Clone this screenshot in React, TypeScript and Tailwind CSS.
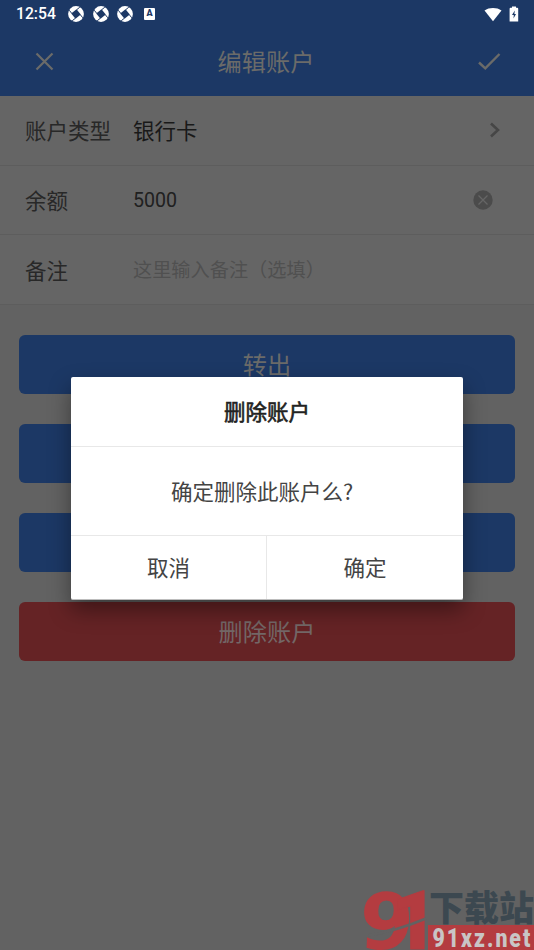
import { useState } from "react";
import type { ReactNode } from "react";

const FONT = "font-['Noto_Sans_CJK_SC',sans-serif]";

const TRANSFER_ACTIONS = ["转出", "转入", "调整余额"];

function ShutterIcon() {
  return (
    <svg width="16" height="16" viewBox="0 0 16 16" fill="none">
      <circle cx="8" cy="8" r="7.9" fill="#fff" />
      <path d="M8.500 3.200 12.800 8.500 7.500 12.800 3.200 7.500Z" fill="#1c3865" />
      <g stroke="#1c3865" strokeWidth="1">
        <path d="M8.600 3.800 11.800 1.200" />
        <path d="M12.200 8.600 14.800 11.800" />
        <path d="M7.400 12.200 4.200 14.800" />
        <path d="M3.800 7.400 1.200 4.200" />
      </g>
    </svg>
  );
}

function StatusBar() {
  return (
    <div className="flex h-7 items-center justify-between pl-4 pr-[15px] font-[Roboto] text-white">
      <div className="flex items-center">
        <span className="w-[52px] text-[15.700px] font-medium leading-7">12:54</span>
        <div className="flex items-center gap-[8.500px]">
          <ShutterIcon />
          <ShutterIcon />
          <ShutterIcon />
        </div>
        <span className="ml-[11px] flex h-3 w-[11px] items-center justify-center rounded-[1px] bg-white text-[9px] font-black text-[#1c3865]">
          A
        </span>
      </div>
      <div className="flex items-center gap-[7px]">
        <svg width="18" height="15" viewBox="0 0 18 15">
          <path d="M.5 3.500C5 .2 13 .2 17.500 3.500L9 14.200Z" fill="#fff" />
        </svg>
        <svg width="10" height="16" viewBox="0 0 10 16">
          <path d="M3 .5h4v1.200h1.200q1 0 1 1V15.500H.6V2.700q0-1 1-1H3Z" fill="#fff" />
          <path d="M5.800 4.500 3 9h1.800l-.3 3.500L7 8H5.400Z" fill="#1c3865" />
        </svg>
      </div>
    </div>
  );
}

function Header() {
  return (
    <header className="h-24 bg-[#1c3865] text-[#6b6b69]">
      <StatusBar />
      <div className="flex h-[66px] items-center justify-between pl-[35px] pr-8">
        <button type="button" aria-label="关闭">
          <svg width="19" height="19" viewBox="0 0 19 19" stroke="currentColor" strokeWidth="2.200">
            <path d="M1.500 1.500 17.500 17.500M17.500 1.500 1.500 17.500" />
          </svg>
        </button>
        <h1 className="pl-px text-[24.200px] font-normal">编辑账户</h1>
        <button type="button" aria-label="保存">
          <svg width="25" height="19" viewBox="0 0 25 19" fill="none" stroke="currentColor" strokeWidth="2.400">
            <path d="M2 10.500 8.300 16.400 22.500 2" />
          </svg>
        </button>
      </div>
    </header>
  );
}

type RowProps = {
  label: string;
  children: ReactNode;
};

function FormRow({ label, children }: RowProps) {
  return (
    <div className="flex h-[69.670px] items-center border-b border-[#5d5d5d] pl-[25px]">
      <span className="w-[108px] shrink-0 text-[21.500px] text-[#282828]">{label}</span>
      {children}
    </div>
  );
}

function DeleteDialog({ onClose }: { onClose: () => void }) {
  return (
    <div
      role="dialog"
      className="absolute left-[71px] top-[377px] h-[223px] w-[392px] overflow-hidden rounded-[2px] border-b border-[#bdbdbd] bg-white text-[21.500px] text-[#444] shadow-[0_10px_22px_rgba(0,0,0,0.4)]"
    >
      <h2 className="flex h-[70px] items-center justify-center border-b border-[#e8e8e8] text-[#222] [-webkit-text-stroke:0.600px_#222]">
        删除账户
      </h2>
      <p className="flex h-[89px] items-center justify-center border-b border-[#e8e8e8] pr-[10px]">
        确定删除此账户么?
      </p>
      <div className="flex h-[63px]">
        <button type="button" onClick={onClose} className="w-[196px] border-r border-[#e8e8e8]">
          取消
        </button>
        <button type="button" onClick={onClose} className="w-[196px]">
          确定
        </button>
      </div>
    </div>
  );
}

function SiteMark() {
  return (
    <svg className="absolute bottom-0 right-0" width="174" height="64" viewBox="0 0 174 64">
      <g fill="#b43c40">
        <text x="1" y="63" fontSize="78" fontFamily="'DejaVu Sans'" fontWeight="700" transform="skewX(-2)">
          9
        </text>
        <text x="31" y="63" fontSize="81" fontFamily="Roboto" fontWeight="900" stroke="#b43c40">
          1
        </text>
      </g>
      <path d="M8 49.500Q36 45 66 32.500" fill="none" stroke="#626262" strokeWidth="2.500" />
      <text
        x="69"
        y="35"
        fontSize="35"
        fontWeight="900"
        fill="#3c4850"
        fontFamily="'Noto Sans CJK SC'"
      >
        下载站
      </text>
      <rect x="68" y="39" width="106" height="25" fill="#b43c40" />
      <text
        transform="translate(72.500 60.500) scale(.85 1)"
        fontSize="25"
        fontWeight="900"
        fontFamily="Roboto"
        fill="#c9c5c5"
        textLength="115"
        lengthAdjust="spacing"
      >
        91xz.net
      </text>
    </svg>
  );
}

export default function App() {
  const [dialogOpen, setDialogOpen] = useState(true);

  return (
    <div lang="zh-CN" className={`relative h-[950px] w-[534px] overflow-hidden bg-[#626262] ${FONT}`}>
      <Header />

      <section className="bg-[#656565]">
        <FormRow label="账户类型">
          <span className="flex-1 text-[21.500px] text-[#191919]">银行卡</span>
          <svg className="mr-[33px]" width="12" height="16" viewBox="0 0 12 16" fill="none" stroke="#464646" strokeWidth="2.600">
            <path d="M2 1.500 9 8 2 14.500" />
          </svg>
        </FormRow>
        <FormRow label="余额">
          <span className="flex-1 pt-px font-[Roboto] text-[19.600px] text-[#202020]">5000</span>
          <svg className="mr-[41px]" width="20" height="20" viewBox="0 0 20 20">
            <circle cx="10" cy="10" r="9.700" fill="#4b4b4b" />
            <path d="M5.500 5.500 14.500 14.500M14.500 5.500 5.500 14.500" stroke="#656565" strokeWidth="1.300" />
          </svg>
        </FormRow>
        <FormRow label="备注">
          <span className="flex-1 text-[19.200px] text-[#505050]">这里输入备注（选填）</span>
        </FormRow>
      </section>

      <div className="flex flex-col gap-[30px] px-[19px] pt-[30px] text-[24.200px] text-[#6b6b69]">
        {TRANSFER_ACTIONS.map((action) => (
          <button key={action} type="button" className="h-[59px] rounded-md bg-[#1c3865]">
            {action}
          </button>
        ))}
        <button
          type="button"
          onClick={() => setDialogOpen(true)}
          className="h-[59px] rounded-md bg-[#652325] text-[#736767]"
        >
          删除账户
        </button>
      </div>

      {dialogOpen && <DeleteDialog onClose={() => setDialogOpen(false)} />}
      <SiteMark />
    </div>
  );
}
